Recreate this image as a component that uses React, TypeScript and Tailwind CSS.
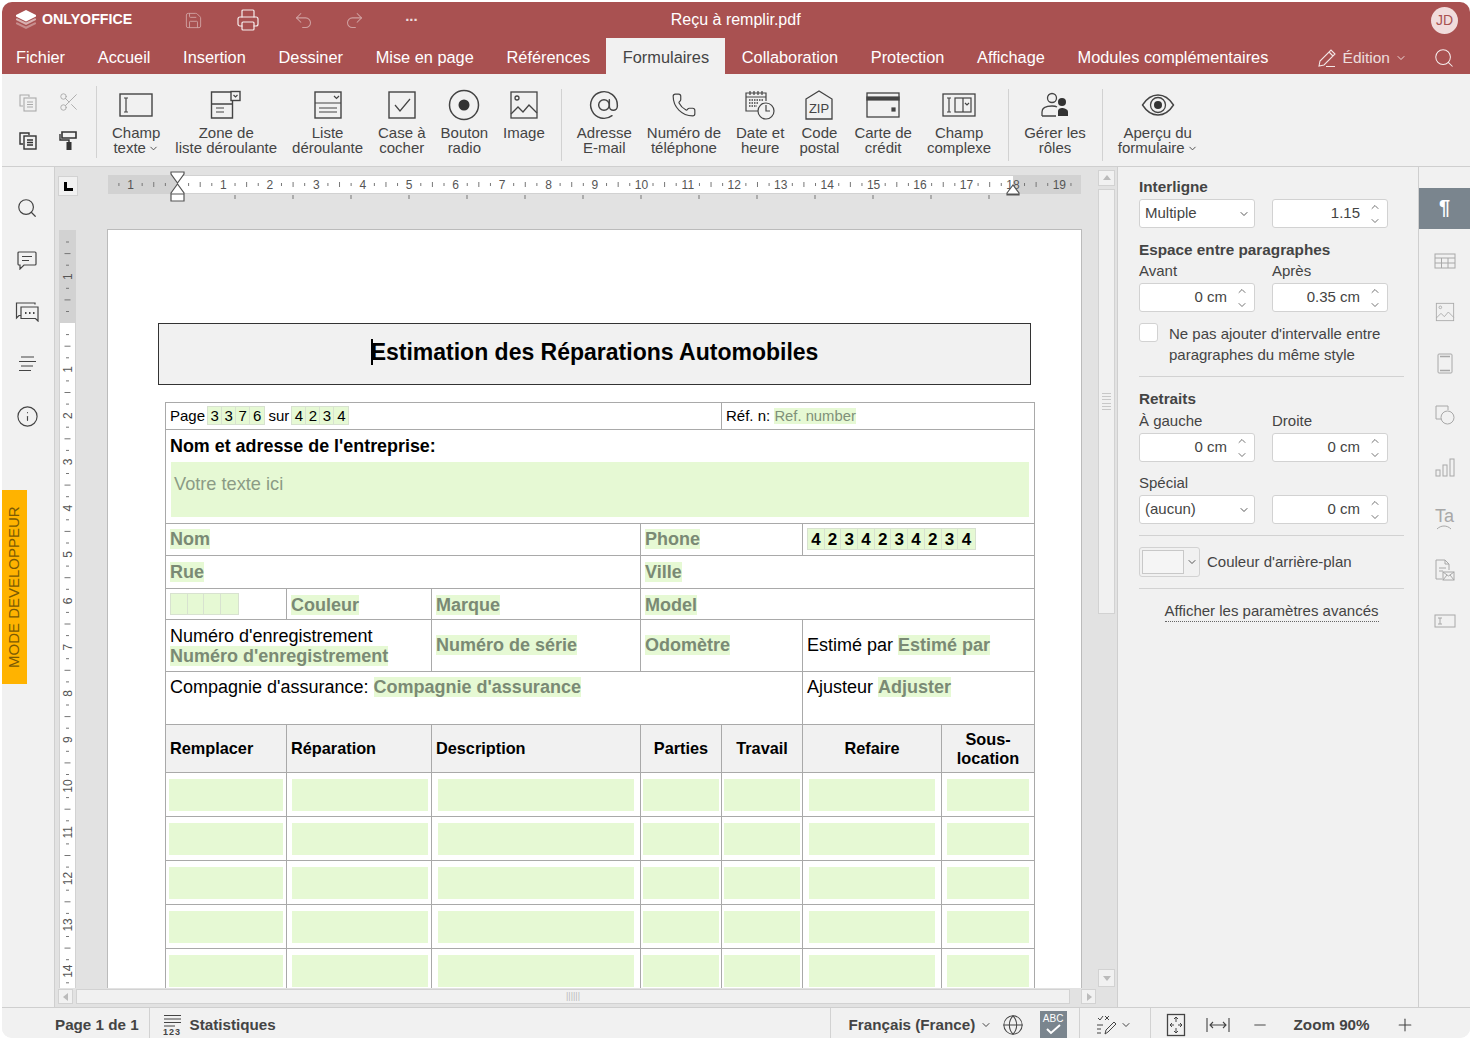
import React from "react";
import {
  AtSign,
  ChevronDown,
  ChevronUp,
  Globe,
  Info,
  Minus,
  Phone,
  Plus,
  Printer,
  Redo2,
  Save,
  Scissors,
  Search,
  Undo2,
} from "lucide-react";

const tabs = [
  "Fichier",
  "Accueil",
  "Insertion",
  "Dessiner",
  "Mise en page",
  "Références",
  "Formulaires",
  "Collaboration",
  "Protection",
  "Affichage",
  "Modules complémentaires",
];

const stroke = { fill: "none", stroke: "#444", strokeWidth: 1.2 };

function CopyIcon({ dark }: { dark?: boolean }) {
  const c = dark ? "#333" : "#aaa";
  return (
    <svg width="20" height="20" viewBox="0 0 20 20" fill="none" stroke={c} strokeWidth={dark ? 1.4 : 1.1}>
      <path d="M5 14H2V3h9v2" />
      <rect x="6" y="6" width="12" height="13" />
      <path d="M9 10h6M9 12.5h6M9 15h6" />
    </svg>
  );
}

function RollerIcon() {
  return (
    <svg width="22" height="22" viewBox="0 0 22 22">
      <path d="M4 3h14v6H4z" fill="none" stroke="#333" strokeWidth="1.6" />
      <path d="M2 5v6h9v2" fill="none" stroke="#333" strokeWidth="1.4" />
      <rect x="8.5" y="13" width="5" height="8" fill="#333" />
    </svg>
  );
}

function TextFieldIcon() {
  return (
    <svg width="34" height="24" viewBox="0 0 34 24" {...stroke}>
      <rect x="1" y="1" width="32" height="22" strokeWidth="1.4" />
      <path d="M5 5h4M5 19h4M7 5v14" />
    </svg>
  );
}

function ComboIcon() {
  return (
    <svg width="32" height="30" viewBox="0 0 32 30" {...stroke}>
      <path d="M1.5 2h21v26h-21zM1.5 14h21" strokeWidth="1.4" />
      <rect x="21" y="1.5" width="9" height="9" fill="#f1f1f1" strokeWidth="1.4" />
      <path d="M23.5 5l2 2 2-2M6 18h8M6 22h8" />
    </svg>
  );
}

function ListIcon() {
  return (
    <svg width="30" height="30" viewBox="0 0 30 30" {...stroke}>
      <rect x="2" y="2" width="26" height="26" strokeWidth="1.4" />
      <path d="M2 13h26M6 18h18M6 22h18M21 6l2.5 2.5L26 6" />
    </svg>
  );
}

function CheckboxIcon() {
  return (
    <svg width="30" height="30" viewBox="0 0 30 30" {...stroke}>
      <rect x="2" y="2" width="26" height="26" strokeWidth="1.4" />
      <path d="M8 15l5 6 10-12" />
    </svg>
  );
}

function RadioIcon() {
  return (
    <svg width="32" height="32" viewBox="0 0 32 32">
      <circle cx="16" cy="16" r="14.5" fill="none" stroke="#444" strokeWidth="1.5" />
      <circle cx="16" cy="16" r="5.5" fill="#333" />
    </svg>
  );
}

function ImageIcon({ color = "#444", size = 30 }: { color?: string; size?: number }) {
  return (
    <svg width={size} height={size} viewBox="0 0 30 30" fill="none" stroke={color} strokeWidth="1.3">
      <rect x="2" y="2" width="26" height="26" />
      <circle cx="8" cy="8" r="2" />
      <path d="M2 24l7-7 5 5 6-7 8 8" />
    </svg>
  );
}

function CalendarIcon() {
  return (
    <svg width="32" height="32" viewBox="0 0 32 32" {...stroke}>
      <path d="M14 22H2V4h20v8" />
      <path d="M2 8h20M6 2v4M10 2v4M14 2v4M18 2v4" />
      <path d="M5 11h14M5 14h10M5 17h8" strokeDasharray="1.5 1" strokeWidth="1.5" />
      <circle cx="22" cy="22" r="8" />
      <path d="M22 16v6h4" />
    </svg>
  );
}

function ZipIcon() {
  return (
    <svg width="30" height="32" viewBox="0 0 30 32" fill="none">
      <path d="M2 10L15 2l13 8v20H2z" stroke="#444" strokeWidth="1.3" />
      <text x="15" y="24" textAnchor="middle" fontSize="13" fill="#444" fontFamily="Liberation Sans, sans-serif">
        ZIP
      </text>
    </svg>
  );
}

function CardIcon() {
  return (
    <svg width="34" height="30" viewBox="0 0 34 30" {...stroke}>
      <rect x="1" y="3" width="32" height="24" strokeWidth="1.3" />
      <rect x="1" y="7" width="32" height="3" fill="#444" />
      <rect x="26" y="18" width="3" height="3" fill="#444" />
    </svg>
  );
}

function ComplexIcon() {
  return (
    <svg width="34" height="26" viewBox="0 0 34 26" {...stroke}>
      <rect x="1" y="2" width="32" height="22" strokeWidth="1.3" />
      <path d="M5 6h4M5 20h4M7 6v14" />
      <rect x="13" y="6" width="16" height="14" />
      <path d="M21 6v14M23 11l2 2 2-2" />
    </svg>
  );
}

function RolesIcon() {
  return (
    <svg width="30" height="26" viewBox="0 0 30 26">
      <circle cx="12" cy="6" r="4.5" fill="none" stroke="#444" strokeWidth="1.3" />
      <path d="M2 24v-4c0-4 4-6 10-6 2 0 4 .3 5 1M2 24h14" fill="none" stroke="#444" strokeWidth="1.3" />
      <circle cx="22" cy="10" r="4" fill="#333" />
      <path d="M18 24v-5c0-2 2-3 4-3s6 1 6 4v4z" fill="#333" />
    </svg>
  );
}

function EyeIcon() {
  return (
    <svg width="34" height="24" viewBox="0 0 34 24">
      <path d="M1.5 12C6 5 11 2 17 2s11 3 15.5 10C28 19 23 22 17 22S6 19 1.5 12z" fill="none" stroke="#444" strokeWidth="1.4" />
      <circle cx="17" cy="12" r="7.5" fill="none" stroke="#444" strokeWidth="1.3" />
      <circle cx="17" cy="12" r="4" fill="#333" />
    </svg>
  );
}

function ToolItem({ icon, lines, chevron }: { icon: React.ReactNode; lines: string[]; chevron?: boolean }) {
  return (
    <div className="flex flex-col items-center">
      <div className="flex h-[32px] items-center justify-center">{icon}</div>
      <div className="mt-[4px] text-center text-[15px] leading-[15px] whitespace-nowrap text-[#444]">
        {lines.map((l, i) => (
          <div key={l} className="flex items-center justify-center">
            {l}
            {chevron && i === 1 && <ChevronDown size={11} className="ml-[2px] mt-[2px]" />}
          </div>
        ))}
      </div>
    </div>
  );
}

function Sep({ tight }: { tight?: boolean }) {
  return <div className={`${tight ? "ml-[1px]" : "ml-[2px]"} h-[72px] w-px shrink-0 self-center bg-[#d2d2d2]`} />;
}

const rulerNumbers = Array.from({ length: 19 }, (_, i) => i + 1);

function TopRuler() {
  const x0 = 69;
  const step = 46.44;
  const ticks: number[] = [];
  for (let i = -2; i < 20; i++) ticks.push(i);
  const inside = (x: number) => x > 2 && x < 971;
  return (
    <svg width="974" height="32" viewBox="0 0 974 32" className="block overflow-visible">
      <rect x="0" y="5" width="973" height="19" fill="#d2d2d2" />
      <rect x={x0} y="6" width="836" height="17" fill="#fff" />
      {ticks.map((n) => (
        <g key={n} stroke="#777" strokeWidth="1">
          {inside(x0 + n * step + 11.6) && <path d={`M${x0 + n * step + 11.6} 13v3`} />}
          {inside(x0 + n * step + 23.2) && <path d={`M${x0 + n * step + 23.2} 12v5`} />}
          {inside(x0 + n * step + 34.8) && <path d={`M${x0 + n * step + 34.8} 13v3`} />}
        </g>
      ))}
      {rulerNumbers.map((n) => (
        <text key={n} x={x0 + n * step} y="19" textAnchor="middle" fontSize="12" fill="#555" fontFamily="Liberation Sans, sans-serif">
          {n}
        </text>
      ))}
      <text x={x0 - step} y="19" textAnchor="middle" fontSize="12" fill="#555" fontFamily="Liberation Sans, sans-serif">
        1
      </text>
      {Array.from({ length: 14 }, (_, i) => (
        <path key={i} d={`M${127 + i * 58} 25v4`} stroke="#777" />
      ))}
      <path d="M63 2h13v2l-6.5 9L63 4zM63 23l6.5-9 6.5 9v1H63zM63 24h13v7H63z" fill="#fff" stroke="#555" strokeWidth="1.2" />
      <path d="M899 23l6-8 6 8v1h-12zM899 24h12v1h-12z" fill="#fff" stroke="#555" strokeWidth="1.2" />
    </svg>
  );
}

function SideRuler() {
  const y0 = 93;
  const step = 46.3;
  const ticks = Array.from({ length: 19 }, (_, i) => i - 2);
  return (
    <svg width="17" height="758" viewBox="0 0 17 758" className="block shrink-0">
      <rect x="0" y="0" width="17" height="758" fill="#d2d2d2" />
      <rect x="1" y={y0} width="15" height="666" fill="#fff" />
      {ticks.map((n) => (
        <g key={n} stroke="#777">
          <path d={`M7 ${y0 + n * step + 11.6}h3`} />
          <path d={`M5.5 ${y0 + n * step + 23.2}h6`} />
          <path d={`M7 ${y0 + n * step + 34.8}h3`} />
        </g>
      ))}
      {[-1, 1, 2, 3, 4, 5, 6, 7, 8, 9, 10, 11, 12, 13, 14].map((n) => (
        <text
          key={n}
          x="0"
          y="0"
          transform={`translate(12.5 ${y0 + n * step}) rotate(-90)`}
          textAnchor="middle"
          fontSize="12"
          fill="#555"
          fontFamily="Liberation Sans, sans-serif"
        >
          {Math.abs(n)}
        </text>
      ))}
    </svg>
  );
}

function Field({ children, small }: { children: React.ReactNode; small?: boolean }) {
  return (
    <span
      className={
        small
          ? "bg-[#e6f9d4] text-[14.8px] leading-[18px] text-[#7f9079]"
          : "bg-[#e6f9d4] text-[18px] leading-[21px] font-bold text-[#7a8a74]"
      }
    >
      {children}
    </span>
  );
}

function Comb({ chars, big }: { chars: string[]; big?: boolean }) {
  return (
    <span className="inline-flex -translate-y-px border border-[#d8e2d0] align-middle">
      {chars.map((c, i) => (
        <span
          key={i}
          className={
            big
              ? "flex h-[20px] w-[16.7px] items-center justify-center border-r border-[#d8e2d0] bg-[#e6f9d4] text-[17px] font-bold text-black last:border-r-0"
              : "flex h-[17px] w-[14px] items-center justify-center border-r border-[#d8e2d0] bg-[#e6f9d4] text-[15px] text-black last:border-r-0"
          }
        >
          {c}
        </span>
      ))}
    </span>
  );
}

const cellLine = "border border-[#a9a9a9] px-[4px]";
const headCell = `${cellLine} bg-[#f1f1f1] text-[16.3px] leading-[19px] font-bold`;
const dataPads = [
  "pl-[3px] pr-[3px]",
  "pl-[5px] pr-[3px]",
  "pl-[6px] pr-[6px]",
  "pl-[2px] pr-[2px]",
  "pl-[2px] pr-[2px]",
  "pl-[6px] pr-[6px]",
  "pl-[5px] pr-[5px]",
];

function DocTable() {
  return (
    <table className="ml-[7px] w-[870px] table-fixed border-collapse text-black">
      <colgroup>
        <col className="w-[121px]" />
        <col className="w-[145px]" />
        <col className="w-[209px]" />
        <col className="w-[81px]" />
        <col className="w-[81px]" />
        <col className="w-[139px]" />
        <col className="w-[93px]" />
      </colgroup>
      <tbody>
        <tr className="h-[27px] text-[15px]">
          <td colSpan={4} className={cellLine}>
            <span className="mr-[-2px]">Page</span> <Comb chars={["3", "3", "7", "6"]} />{" "}
            <span className="mr-[-2px] ml-[-1px]">sur</span> <Comb chars={["4", "2", "3", "4"]} />
          </td>
          <td colSpan={3} className={cellLine}>
            Réf. n: <Field small>Ref. number</Field>
          </td>
        </tr>
        <tr className="h-[94px]">
          <td colSpan={7} className={`${cellLine} align-top`}>
            <div className="mt-[4px] text-[17.9px] leading-[24px] font-bold">Nom et adresse de l'entreprise:</div>
            <div className="mt-[4px] mr-[1px] ml-[1px] h-[55px] bg-[#e6f9d4] px-[3px] pt-[10px] text-[18.2px] leading-[24px] text-[#8b9b85]">
              Votre texte ici
            </div>
          </td>
        </tr>
        <tr className="h-[32px]">
          <td colSpan={3} className={cellLine}>
            <Field>Nom</Field>
          </td>
          <td colSpan={2} className={cellLine}>
            <Field>Phone</Field>
          </td>
          <td colSpan={2} className={cellLine}>
            <Comb big chars={["4", "2", "3", "4", "2", "3", "4", "2", "3", "4"]} />
          </td>
        </tr>
        <tr className="h-[33px]">
          <td colSpan={3} className={`${cellLine} pt-[2px]`}>
            <Field>Rue</Field>
          </td>
          <td colSpan={4} className={`${cellLine} pt-[2px]`}>
            <Field>Ville</Field>
          </td>
        </tr>
        <tr className="h-[31px]">
          <td className={cellLine}>
            <Comb big chars={["", "", "", ""]} />
          </td>
          <td className={`${cellLine} pt-[3px]`}>
            <Field>Couleur</Field>
          </td>
          <td className={`${cellLine} pt-[3px]`}>
            <Field>Marque</Field>
          </td>
          <td colSpan={4} className={`${cellLine} pt-[3px]`}>
            <Field>Model</Field>
          </td>
        </tr>
        <tr className="h-[52px] text-[18px] leading-[20px]">
          <td colSpan={2} className={`${cellLine} pt-[2px]`}>
            Numéro d'enregistrement
            <br />
            <Field>Numéro d'enregistrement</Field>
          </td>
          <td className={cellLine}>
            <Field>Numéro de série</Field>
          </td>
          <td colSpan={2} className={cellLine}>
            <Field>Odomètre</Field>
          </td>
          <td colSpan={2} className={cellLine}>
            Estimé par <Field>Estimé par</Field>
          </td>
        </tr>
        <tr className="h-[53px] text-[18px] leading-[20px]">
          <td colSpan={5} className={`${cellLine} pt-[5px] align-top`}>
            Compagnie d'assurance: <Field>Compagnie d'assurance</Field>
          </td>
          <td colSpan={2} className={`${cellLine} pt-[5px] align-top`}>
            Ajusteur <Field>Adjuster</Field>
          </td>
        </tr>
        <tr className="h-[48px]">
          <td className={headCell}>Remplacer</td>
          <td className={headCell}>Réparation</td>
          <td className={headCell}>Description</td>
          <td className={`${headCell} text-center`}>Parties</td>
          <td className={`${headCell} text-center`}>Travail</td>
          <td className={`${headCell} text-center`}>Refaire</td>
          <td className={`${headCell} text-center`}>
            Sous-
            <br />
            location
          </td>
        </tr>
        {[0, 1, 2, 3, 4].map((r) => (
          <tr key={r} className="h-[44px]">
            {dataPads.map((pad) => (
              <td key={pad} className={`border border-[#a9a9a9] pt-[6px] pb-[5px] ${pad}`}>
                <div className="h-[32px] bg-[#e6f9d4]" />
              </td>
            ))}
          </tr>
        ))}
      </tbody>
    </table>
  );
}

function Spin({ value }: { value: string }) {
  return (
    <div className="flex h-[29px] w-[116px] items-center justify-end rounded-[3px] border border-[#d2d2d2] bg-white pr-[6px] text-[15px] text-[#444]">
      <span>{value}</span>
      <span className="ml-[9px] flex flex-col gap-[2px]">
        <ChevronUp size={12} strokeWidth={1.5} />
        <ChevronDown size={12} strokeWidth={1.5} />
      </span>
    </div>
  );
}

function Dropdown({ value }: { value: string }) {
  return (
    <div className="flex h-[29px] w-[116px] items-center justify-between rounded-[3px] border border-[#d2d2d2] bg-white pr-[4px] pl-[5px] text-[15px] text-[#444]">
      <span>{value}</span>
      <ChevronDown size={12} strokeWidth={1.8} />
    </div>
  );
}

function RightPanel() {
  return (
    <aside className="flex w-[302px] shrink-0 flex-col border-x border-[#cfcfcf] bg-[#f1f1f1] pt-[10px] pl-[21px] text-[15px] text-[#444]">
      <div className="h-[20px] text-[15.3px] leading-[20px] font-bold">Interligne</div>
      <div className="mt-[2px] flex gap-[17px]">
        <Dropdown value="Multiple" />
        <Spin value="1.15" />
      </div>
      <div className="mt-[12px] h-[20px] text-[15.3px] leading-[20px] font-bold">Espace entre paragraphes</div>
      <div className="mt-[1px] flex gap-[17px]">
        <div className="w-[116px] leading-[20px]">Avant</div>
        <div className="w-[116px] leading-[20px]">Après</div>
      </div>
      <div className="mt-[2px] flex gap-[17px]">
        <Spin value="0 cm" />
        <Spin value="0.35 cm" />
      </div>
      <div className="mt-[11px] flex w-[265px]">
        <div className="h-[19px] w-[19px] shrink-0 rounded-[3px] border border-[#d2d2d2] bg-white" />
        <div className="ml-[11px] leading-[21px]">
          Ne pas ajouter d'intervalle entre
          <br />
          paragraphes du même style
        </div>
      </div>
      <div className="mt-[11px] h-px w-[265px] bg-[#d2d2d2]" />
      <div className="mt-[12px] h-[20px] text-[15.3px] leading-[20px] font-bold">Retraits</div>
      <div className="mt-[2px] flex gap-[17px]">
        <div className="w-[116px] leading-[20px]">À gauche</div>
        <div className="w-[116px] leading-[20px]">Droite</div>
      </div>
      <div className="mt-[2px] flex gap-[17px]">
        <Spin value="0 cm" />
        <Spin value="0 cm" />
      </div>
      <div className="mt-[11px] leading-[20px]">Spécial</div>
      <div className="mt-[2px] flex gap-[17px]">
        <Dropdown value="(aucun)" />
        <Spin value="0 cm" />
      </div>
      <div className="mt-[11px] h-px w-[265px] bg-[#d2d2d2]" />
      <div className="mt-[11px] flex h-[30px] items-center">
        <div className="flex h-[30px] w-[61px] items-center rounded-[3px] border border-[#d2d2d2] bg-[#f1f1f1] pl-[2px]">
          <div className="h-[24px] w-[42px] border border-[#c8c8c8] bg-[#f5f5f5]" />
          <ChevronDown size={12} strokeWidth={1.8} className="ml-[2px]" />
        </div>
        <span className="ml-[7px]">Couleur d'arrière-plan</span>
      </div>
      <div className="mt-[11px] h-px w-[265px] bg-[#d2d2d2]" />
      <div className="mt-[11px] w-[265px] text-center">
        <span className="border-b border-dotted border-[#666] pb-[2px]">Afficher les paramètres avancés</span>
      </div>
    </aside>
  );
}

function RightTabs() {
  const icon = "#a8a8a8";
  const row = "flex h-[51.5px] items-center justify-center";
  return (
    <aside className="flex w-[51px] shrink-0 flex-col items-center bg-[#f1f1f1] pt-[21px]">
      <div className="mb-[6px] flex h-[41px] w-full items-center justify-center bg-[#7a858e] pb-[3px] text-[20px] font-bold text-white">¶</div>
      <div className={row}>
        <svg width="22" height="16" viewBox="0 0 22 16" fill="none" stroke={icon}>
          <rect x="1" y="1" width="20" height="14" />
          <path d="M1 5h20M1 10h20M7.5 5v10M14 5v10" />
        </svg>
      </div>
      <div className={row}>
        <ImageIcon color={icon} size={20} />
      </div>
      <div className={row}>
        <svg width="16" height="21" viewBox="0 0 16 21" fill="none" stroke={icon}>
          <rect x="1" y="1" width="14" height="19" rx="1" />
          <path d="M3 3.5h10M3 17.5h10" strokeWidth="1.5" />
        </svg>
      </div>
      <div className={row}>
        <svg width="20" height="20" viewBox="0 0 20 20" fill="none" stroke={icon}>
          <path d="M7 14H1V1h12v4" />
          <circle cx="12.5" cy="12.5" r="6.5" fill="#f1f1f1" />
        </svg>
      </div>
      <div className={row}>
        <svg width="20" height="20" viewBox="0 0 20 20" fill="none" stroke={icon}>
          <rect x="1" y="13" width="4" height="6" />
          <rect x="8" y="8" width="4" height="11" />
          <rect x="15" y="2" width="4" height="17" />
        </svg>
      </div>
      <div className={`${row} flex-col`}>
        <span className="text-[18px] leading-[18px] text-[#a8a8a8]">Ta</span>
        <svg width="16" height="5" viewBox="0 0 16 5" fill="none" stroke={icon}>
          <path d="M1 4c4-4 10-4 14 0" />
        </svg>
      </div>
      <div className={row}>
        <svg width="20" height="22" viewBox="0 0 20 22" fill="none" stroke={icon}>
          <path d="M7 20H1V1h9l4 4v6M10 1v4h4M4 9h7M4 12h4" />
          <rect x="8" y="13" width="11" height="8" fill="#f1f1f1" />
          <path d="M8 13l5.5 4 5.5-4M8 21l4-5M19 21l-4-5" />
        </svg>
      </div>
      <div className={row}>
        <svg width="22" height="14" viewBox="0 0 22 14" fill="none" stroke={icon}>
          <rect x="1" y="1" width="20" height="12" />
          <path d="M4 4h4M4 10h4M6 4v6" />
        </svg>
      </div>
    </aside>
  );
}

function LeftBar() {
  const cls = "flex h-[52px] items-center justify-center pr-[2px] text-[#444]";
  return (
    <aside className="relative flex w-[53px] shrink-0 flex-col border-r border-[#cfcfcf] bg-[#f1f1f1] pt-[15px]">
      <div className={cls}>
        <Search size={22} strokeWidth={1.3} />
      </div>
      <div className={cls}>
        <svg width="20" height="19" viewBox="0 0 20 19" {...stroke}>
          <path d="M2 1h16a1 1 0 0 1 1 1v11a1 1 0 0 1-1 1H7l-4 4v-4H2a1 1 0 0 1-1-1V2a1 1 0 0 1 1-1z" />
          <path d="M5 5.5h10M5 9.5h7" />
        </svg>
      </div>
      <div className={cls}>
        <svg width="24" height="20" viewBox="0 0 24 20" {...stroke}>
          <path d="M20 2.5V1H1.5v15l2.5-2.5h2" />
          <path d="M6 5h17v14l-2.5-2.5H6z" />
          <path d="M10 11h1.5M14 11h1.5M18 11h1.5" strokeWidth="2" />
        </svg>
      </div>
      <div className={cls}>
        <svg width="20" height="16" viewBox="0 0 20 16" {...stroke}>
          <path d="M4 1h13M2 5.500h17M4 10h12M2 14.500h12" />
        </svg>
      </div>
      <div className={cls}>
        <Info size={23} strokeWidth={1.2} />
      </div>
      <div className="absolute top-[323px] left-0 flex h-[194px] w-[25px] rotate-180 items-center justify-center bg-[#ffb300] text-[15px] text-[#7a5a05] [writing-mode:vertical-rl]">
        MODE DEVELOPPEUR
      </div>
    </aside>
  );
}

function Triangle({ dir }: { dir: "up" | "down" | "left" | "right" }) {
  const d = { up: "M1 7l4-5 4 5z", down: "M1 3l4 5 4-5z", left: "M7 1L2 5l5 4z", right: "M3 1l5 4-5 4z" }[dir];
  return (
    <svg width="10" height="10" viewBox="0 0 10 10">
      <path d={d} fill="#bbb" />
    </svg>
  );
}

function FootDivider() {
  return <div className="-mt-[4px] w-px self-stretch bg-[#d2d2d2]" />;
}

export default function App() {
  return (
    <div className="h-[1040px] w-[1472px] bg-white p-[2px] font-['Liberation_Sans',Arial,sans-serif]">
      <div className="flex h-[1036px] flex-col overflow-hidden rounded-[10px] bg-[#f1f1f1]">
        {/* Title row */}
        <header className="flex h-[36px] shrink-0 items-center bg-[#a95151] text-white">
          <svg width="22" height="22" viewBox="0 0 22 22" className="ml-[13px]">
            <path d="M11 13.5l9-4.2 1 .5V11L11 16 1 11V9.800l1-.5z" fill="#fff" opacity="0.55" />
            <path d="M11 17.5l9-4.2 1 .5V15l-10 5L1 15v-1.2l1-.5z" fill="#fff" opacity="0.35" />
            <path d="M11 1l10 5v1.5L11 12.500 1 7.5V6z" fill="#fff" />
          </svg>
          <span className="ml-[5px] text-[14.2px] font-bold">ONLYOFFICE</span>
          <Save size={19} strokeWidth={1.2} className="ml-[52px] opacity-45" />
          <Printer size={24} strokeWidth={1.2} className="ml-[33px] opacity-90" />
          <Undo2 size={21} strokeWidth={1.2} className="ml-[33px] opacity-45" />
          <Redo2 size={21} strokeWidth={1.2} className="ml-[30px] opacity-45" />
          <span className="-mt-[8px] ml-[40px] text-[15px] font-bold opacity-80">...</span>
          <span className="ml-[253px] w-[130px] text-center text-[16px] whitespace-nowrap">Reçu à remplir.pdf</span>
          <div className="mr-[12px] ml-auto flex h-[27px] w-[27px] items-center justify-center rounded-full bg-[#f1dcdc] text-[14px] text-[#a95151]">
            JD
          </div>
        </header>
        {/* Tabs */}
        <nav className="flex h-[36px] shrink-0 items-end bg-[#a95151] text-white">
          {tabs.map((t, i) => (
            <div
              key={t}
              className={`flex h-[36px] items-center pt-[3px] text-[16.35px] whitespace-nowrap ${i === 0 ? "pr-[16.35px] pl-[14px]" : "px-[16.35px]"} ${t === "Formulaires" ? "bg-[#f1f1f1] text-[#444]" : ""}`}
            >
              {t}
            </div>
          ))}
          <div className="ml-auto flex h-[36px] items-center pt-[3px] pr-[15px]">
            <svg width="20" height="20" viewBox="0 0 20 20" fill="none" stroke="#fff" strokeWidth="1.1" opacity="0.85">
              <path d="M2 18l1-5L14 2l4 4L7 17zM12 4l4 4M9 18.5h9" />
            </svg>
            <span className="ml-[6px] text-[15.5px] opacity-80">Édition</span>
            <ChevronDown size={12} className="mr-[26px] ml-[5px] opacity-80" />
            <Search size={22} strokeWidth={1.1} className="opacity-90" />
          </div>
        </nav>
        {/* Toolbar */}
        <section className="flex h-[93px] shrink-0 items-start border-b border-[#cfcfcf] bg-[#f1f1f1] pt-[15px]">
          <div className="ml-[16px] grid w-[70px] grid-cols-[40px_30px] grid-rows-[26px_26px] items-center justify-items-start gap-y-[12px]">
            <CopyIcon />
            <Scissors size={22} strokeWidth={1} className="text-[#aaa]" />
            <CopyIcon dark />
            <RollerIcon />
          </div>
          <div className="mx-[8px] -mt-[3px] h-[72px] w-px shrink-0 bg-[#d2d2d2]" />
          <div className="ml-[7px] flex gap-[15px]">
            <ToolItem icon={<TextFieldIcon />} lines={["Champ", "texte"]} chevron />
            <ToolItem icon={<ComboIcon />} lines={["Zone de", "liste déroulante"]} />
            <ToolItem icon={<ListIcon />} lines={["Liste", "déroulante"]} />
            <ToolItem icon={<CheckboxIcon />} lines={["Case à", "cocher"]} />
            <ToolItem icon={<RadioIcon />} lines={["Bouton", "radio"]} />
            <ToolItem icon={<ImageIcon />} lines={["Image", "\u00a0"]} />
            <Sep tight />
            <ToolItem icon={<AtSign size={32} strokeWidth={1.1} color="#444" />} lines={["Adresse", "E-mail"]} />
            <ToolItem icon={<Phone size={26} strokeWidth={1.1} color="#444" />} lines={["Numéro de", "téléphone"]} />
            <ToolItem icon={<CalendarIcon />} lines={["Date et", "heure"]} />
            <ToolItem icon={<ZipIcon />} lines={["Code", "postal"]} />
            <ToolItem icon={<CardIcon />} lines={["Carte de", "crédit"]} />
            <ToolItem icon={<ComplexIcon />} lines={["Champ", "complexe"]} />
            <Sep />
            <ToolItem icon={<RolesIcon />} lines={["Gérer les", "rôles"]} />
            <Sep tight />
            <ToolItem icon={<EyeIcon />} lines={["Aperçu du", "formulaire"]} chevron />
          </div>
        </section>
        {/* Main */}
        <main className="flex min-h-0 flex-1">
          <LeftBar />
          <div className="flex w-[1062px] shrink-0 bg-[#e2e2e2]">
            <div className="flex w-[1043px] shrink-0 flex-col">
              <div className="flex h-[62px] shrink-0 pl-[3px]">
                <div className="mt-[9px] flex h-[20px] w-[20px] items-end justify-center border border-[#d2d2d2] bg-[#f1f1f1] pb-[4px]">
                  <div className="h-[9px] w-[9px] border-b-[3px] border-l-[3px] border-black" />
                </div>
                <div className="mt-[3px] ml-[30px]">
                  <TopRuler />
                </div>
              </div>
              <div className="flex h-[759px] shrink-0 overflow-hidden">
                <div className="mt-[1px] ml-[4px]">
                  <SideRuler />
                </div>
                <div className="ml-[31px] h-[1000px] w-[975px] shrink-0 border border-b-0 border-[#bbb] bg-white pt-[93px] pl-[50px]">
                  <div className="flex h-[62px] w-[873px] items-center justify-center border-[1.5px] border-[#333] bg-[#f1f1f1] pb-[4px] text-[23px] font-bold text-black">
                    <span className="-mr-[2px] inline-block h-[26px] w-[2px] bg-black" />
                    Estimation des Réparations Automobiles
                  </div>
                  <div className="mt-[17px]">
                    <DocTable />
                  </div>
                </div>
              </div>
              <div className="flex h-[18px] shrink-0 items-start pt-px pl-[3px]">
                <div className="flex h-[15px] w-[15px] items-center justify-center border border-[#d2d2d2] bg-[#f1f1f1]">
                  <Triangle dir="left" />
                </div>
                <div className="ml-[3px] flex h-[15px] w-[994px] items-center justify-center border border-[#d2d2d2] bg-[#f1f1f1] text-[9px] leading-none text-[#bbb]">
                  ||||||
                </div>
                <div className="ml-[11px] flex h-[15px] w-[15px] items-center justify-center border border-[#d2d2d2] bg-[#f1f1f1]">
                  <Triangle dir="right" />
                </div>
              </div>
            </div>
            <div className="flex flex-1 flex-col items-center pt-[3px] pr-[2px]">
              <div className="flex h-[16px] w-[17px] items-center justify-center border border-[#d2d2d2] bg-[#f1f1f1]">
                <Triangle dir="up" />
              </div>
              <div className="mt-[3px] flex h-[425px] w-[17px] items-center justify-center border border-[#d2d2d2] bg-[#f1f1f1]">
                <div className="flex h-[18px] w-[9px] flex-col justify-between">
                  {[0, 1, 2, 3, 4, 5].map((i) => (
                    <div key={i} className="h-px bg-[#c8c8c8]" />
                  ))}
                </div>
              </div>
              <div className="mt-[355px] flex h-[18px] w-[17px] items-center justify-center border border-[#d2d2d2] bg-[#f1f1f1]">
                <Triangle dir="down" />
              </div>
            </div>
          </div>
          <RightPanel />
          <RightTabs />
        </main>
        {/* Status bar */}
        <footer className="flex h-[31px] shrink-0 items-center border-t border-[#cfcfcf] bg-[#f1f1f1] pt-[4px] text-[15.2px] font-bold text-[#444]">
          <span className="mr-[10px] ml-[53px]">Page 1 de 1</span>
          <FootDivider />
          <svg width="19" height="22" viewBox="0 0 19 22" className="ml-[13px]">
            <path d="M1 1.5h17M1 5h17M1 8.5h17M1 12h11" stroke="#444" fill="none" />
            <text x="0" y="21" fontSize="9" fill="#444" fontFamily="Liberation Sans, sans-serif" letterSpacing="1">
              123
            </text>
          </svg>
          <span className="ml-[8px] w-[85px] whitespace-nowrap">Statistiques</span>
          <div className="ml-[555px]" />
          <FootDivider />
          <span className="ml-[18px] w-[125px] whitespace-nowrap">Français (France)</span>
          <ChevronDown size={12} className="ml-[6px]" />
          <Globe size={22} strokeWidth={1.1} className="ml-[10px]" />
          <div className="ml-[16px] flex h-[27px] w-[27px] flex-col items-center justify-center self-end bg-[#7a858e] font-normal text-white">
            <span className="text-[10px] leading-[10px]">ABC</span>
            <svg width="18" height="11" viewBox="0 0 18 11" fill="none" stroke="#fff" strokeWidth="2">
              <path d="M3 5l4 4 9-8" />
            </svg>
          </div>
          <div className="ml-[12px]" />
          <FootDivider />
          <svg width="22" height="22" viewBox="0 0 22 22" fill="none" stroke="#444" className="ml-[16px]">
            <path d="M2 4l2 2 3-4M9 2l4 4M13 2L9 6M1 11h6M1 15h4M1 19h4M9 20l1-4 8-8 2 2-8 8z" />
          </svg>
          <ChevronDown size={12} className="ml-[2px]" />
          <div className="ml-[18px]" />
          <FootDivider />
          <svg width="20" height="24" viewBox="0 0 20 24" fill="none" stroke="#444" className="ml-[15px]">
            <rect x="1.5" y="1.5" width="17" height="21" strokeWidth="1.3" />
            <path d="M10 4v5M8 6l2-2 2 2M10 20v-5M8 18l2 2 2-2M4 12h4M6 10l-2 2 2 2M16 12h-4M14 10l2 2-2 2" />
          </svg>
          <svg width="24" height="16" viewBox="0 0 24 16" fill="none" stroke="#444" className="ml-[20px]">
            <path d="M1 1v14M23 1v14M4 8h16M7 5L4 8l3 3M17 5l3 3-3 3" strokeWidth="1.1" />
          </svg>
          <Minus size={18} strokeWidth={1.3} className="ml-[21px]" />
          <span className="ml-[25px] w-[76px] whitespace-nowrap">Zoom 90%</span>
          <Plus size={20} strokeWidth={1.3} className="ml-[25px]" />
        </footer>
      </div>
    </div>
  );
}
